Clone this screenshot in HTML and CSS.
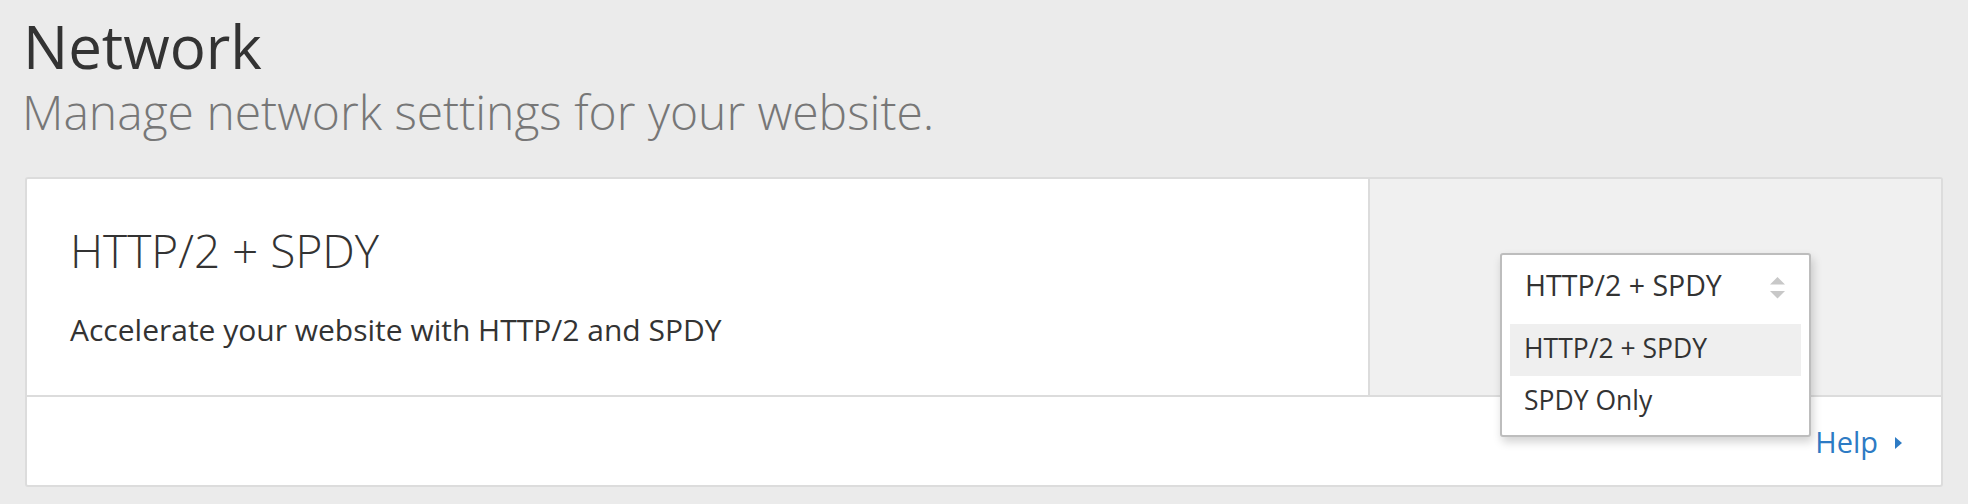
FILE: index.html
```html
<!DOCTYPE html>
<html lang="en">
<head>
  <meta charset="UTF-8" />
  <title>Network</title>
  <link rel="stylesheet" href="styles.css">
</head>
<body>
  <div class="page">
    <div class="page-header">
      <h1>Network</h1>
      <p class="lead">Manage network settings for your website.</p>
    </div>

    <div class="card">
      <div class="card-body">
        <div class="card-main">
          <h2>HTTP/2 + SPDY</h2>
          <p>Accelerate your website with HTTP/2 and SPDY</p>
        </div>
        <div class="card-control">
          <div class="select">
            <div class="select-menu">
              <div class="select-value">
                <span>HTTP/2 + SPDY</span>
                <svg class="select-arrows" width="15" height="22" viewBox="0 0 15 22">
                  <polygon points="0,7.5 7.5,0 15,7.5" />
                  <polygon points="0,14 15,14 7.5,21.5" />
                </svg>
              </div>
              <ul class="select-options">
                <li class="active">HTTP/2 + SPDY</li>
                <li>SPDY Only</li>
              </ul>
            </div>
          </div>
        </div>
      </div>
      <div class="card-footer">
        <a class="help" href="#">Help
          <svg width="7" height="12" viewBox="0 0 7 12"><polygon points="0,0 7,6 0,12" /></svg>
        </a>
      </div>
    </div>
  </div>
</body>
</html>
```

FILE: styles.css
```css
body { margin: 0; background: #ebebeb; font-family: "Open Sans", "Liberation Sans", sans-serif; color: #333; }
.page { padding: 12px 25px 0; }

.page-header h1 { margin: 0 0 0 -2px; font-size: 60px; font-weight: 400; line-height: 68px; color: #333; }
.page-header .lead { margin: 4px 0 0 -3px; font-size: 48px; font-weight: 300; line-height: 56px; color: #777; }

.card { margin-top: 37px; background: #fff; border: 2px solid #dcdcdc; border-radius: 3px; }
.card-body { display: flex; border-bottom: 2px solid #dcdcdc; }
.card-main { flex: 1; padding: 45px 43px; border-right: 2px solid #dcdcdc; }
.card-main h2 { margin: 0; font-size: 46px; font-weight: 350; line-height: 52px; }
.card-main p { margin: 34px 0 0; font-size: 30px; line-height: 40px; }
.card-control { width: 571px; background: #f0f0f0; display: flex; align-items: center; justify-content: center; }

.select { position: relative; width: 311px; height: 68px; }
.select-menu { position: absolute; top: 0; left: 0; right: 0; z-index: 2; background: #fff; border: 2px solid #bdbdbd; border-radius: 3px; box-shadow: 2px 5px 10px rgba(0,0,0,0.18); }
.select-value { display: flex; align-items: center; justify-content: space-between; height: 66px; box-sizing: border-box; padding: 0 24px 6px 23px; font-size: 28.5px; }
.select-arrows { fill: #c8c8c8; margin-top: 6px; }
.select-options { list-style: none; margin: 3px 0 0; padding: 0 8px 7px; }
.select-options li { height: 52px; box-sizing: border-box; padding: 0 12px 5px 14px; display: flex; align-items: center; font-size: 26.5px; }
.select-options li.active { background: #efefef; }

.card-footer { height: 88px; display: flex; align-items: center; justify-content: flex-end; padding: 0 39px; }
.help { display: flex; align-items: center; gap: 17px; font-size: 29px; color: #2d7bc4; text-decoration: none; }
.help svg { fill: #2d7bc4; margin-top: 3px; }
```
